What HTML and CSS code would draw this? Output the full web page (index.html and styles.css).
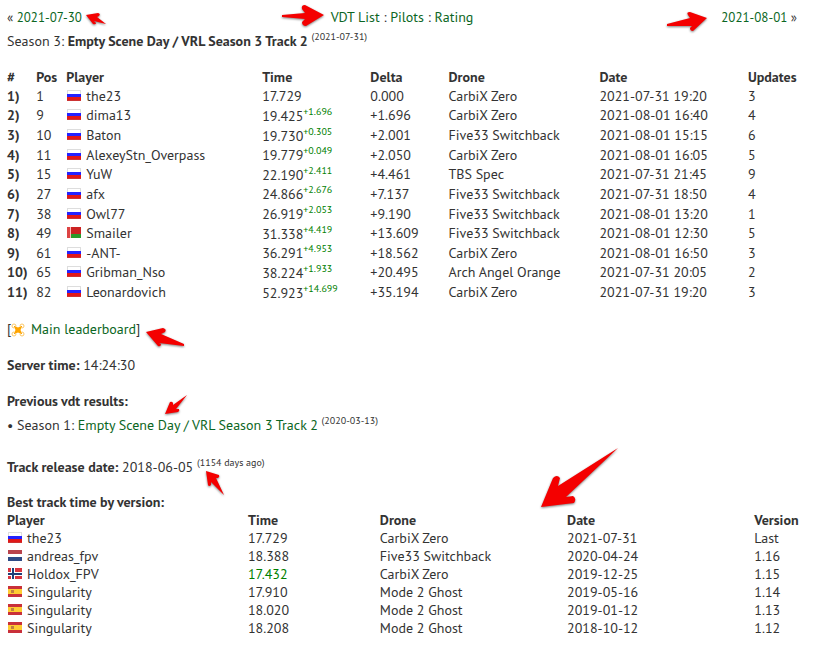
FILE: index.html
```
<!DOCTYPE html>
<html lang="en">
<head>
    <meta charset="UTF-8">
    <meta name="viewport" content="width=device-width, initial-scale=1.0">
    <title>Track leaderboard</title>
    <link rel="stylesheet" href="styles.css">
</head>
<body>

<!-- shared icons -->
<svg class="symbols" aria-hidden="true">
    <symbol id="ru" viewBox="0 0 14 11">
        <rect width="14" height="11" fill="#ddd"/>
        <rect x="1" y="1" width="12" height="3" fill="#fff"/>
        <rect y="4" width="14" height="3" fill="#22f"/>
        <rect y="7" width="14" height="3" fill="#e01818"/>
        <rect y="10" width="14" height="1" fill="#c33"/>
    </symbol>
    <symbol id="by" viewBox="0 0 14 11">
        <rect width="14" height="11" fill="#c22"/>
        <rect y="7" width="14" height="4" fill="#2a9a2a"/>
        <rect width="4" height="11" fill="#d44"/>
        <rect x="3" width="1" height="11" fill="#fbb"/>
    </symbol>
    <symbol id="nl" viewBox="0 0 14 11">
        <rect width="14" height="11" fill="#b8434c"/>
        <rect y="4" width="14" height="3" fill="#fff"/>
        <rect y="7" width="14" height="4" fill="#2d4a86"/>
    </symbol>
    <symbol id="no" viewBox="0 0 14 11">
        <rect width="14" height="11" fill="#d8353f"/>
        <path d="M3 0h4v11H3zM0 4h14v4H0z" fill="#fff"/>
        <path d="M4 0h2v11H4zM0 5h14v2H0z" fill="#1f3d77"/>
    </symbol>
    <symbol id="es" viewBox="0 0 14 11">
        <rect width="14" height="11" fill="#c9303a"/>
        <rect y="3" width="14" height="5" fill="#fc3"/>
        <rect x="3" y="4" width="3" height="3" fill="#c08040"/>
    </symbol>
    <symbol id="drone" viewBox="0 0 14 14">
        <g fill="none" stroke="#fbc766" stroke-width="1">
            <circle cx="3" cy="3" r="2"/>
            <circle cx="11" cy="3" r="2"/>
            <circle cx="3" cy="11" r="2"/>
            <circle cx="11" cy="11" r="2"/>
        </g>
        <path d="M3 3l8 8M11 3l-8 8" stroke="#ffa500" stroke-width="1"/>
        <path d="M4 4l3 1 3-1-1 3 1 3-3-1-3 1 1-3z" fill="#ffa500" stroke="#ffa500"/>
    </symbol>
</svg>

<div class="container">
    <nav class="nav">
        <div class="day">« <a href="#prev">2021-07-30</a></div>
        <div><a href="#list">VDT List</a> : <a href="#pilots">Pilots</a> : <a href="#rating">Rating</a></div>
        <div class="day next"><a href="#next">2021-08-01</a> »</div>
    </nav>
    <div class="track">Season 3: <b>Empty Scene Day / VRL Season 3 Track 2</b> <sup>(2021-07-31)</sup></div>

    <table class="results">
        <colgroup>
            <col class="c-num"><col class="c-pos"><col class="c-player"><col class="c-time">
            <col class="c-delta"><col class="c-drone"><col class="c-date"><col>
        </colgroup>
        <thead>
            <tr><th>#</th><th>Pos</th><th>Player</th><th>Time</th><th>Delta</th><th>Drone</th><th>Date</th><th>Updates</th></tr>
        </thead>
        <tbody>
            <tr><th>1)</th><td>1</td><td><svg class="flag"><use href="#ru"/></svg>the23</td><td class="time">17.729</td><td>0.000</td><td>CarbiX Zero</td><td>2021-07-31 19:20</td><td>3</td></tr>
            <tr><th>2)</th><td>9</td><td><svg class="flag"><use href="#ru"/></svg>dima13</td><td class="time">19.425<sup>+1.696</sup></td><td>+1.696</td><td>CarbiX Zero</td><td>2021-08-01 16:40</td><td>4</td></tr>
            <tr><th>3)</th><td>10</td><td><svg class="flag"><use href="#ru"/></svg>Baton</td><td class="time">19.730<sup>+0.305</sup></td><td>+2.001</td><td>Five33 Switchback</td><td>2021-08-01 15:15</td><td>6</td></tr>
            <tr><th>4)</th><td>11</td><td><svg class="flag"><use href="#ru"/></svg>AlexeyStn_Overpass</td><td class="time">19.779<sup>+0.049</sup></td><td>+2.050</td><td>CarbiX Zero</td><td>2021-08-01 16:05</td><td>5</td></tr>
            <tr><th>5)</th><td>15</td><td><svg class="flag"><use href="#ru"/></svg>YuW</td><td class="time">22.190<sup>+2.411</sup></td><td>+4.461</td><td>TBS Spec</td><td>2021-07-31 21:45</td><td>9</td></tr>
            <tr><th>6)</th><td>27</td><td><svg class="flag"><use href="#ru"/></svg>afx</td><td class="time">24.866<sup>+2.676</sup></td><td>+7.137</td><td>Five33 Switchback</td><td>2021-07-31 18:50</td><td>4</td></tr>
            <tr><th>7)</th><td>38</td><td><svg class="flag"><use href="#ru"/></svg>Owl77</td><td class="time">26.919<sup>+2.053</sup></td><td>+9.190</td><td>Five33 Switchback</td><td>2021-08-01 13:20</td><td>1</td></tr>
            <tr><th>8)</th><td>49</td><td><svg class="flag"><use href="#by"/></svg>Smailer</td><td class="time">31.338<sup>+4.419</sup></td><td>+13.609</td><td>Five33 Switchback</td><td>2021-08-01 12:30</td><td>5</td></tr>
            <tr><th>9)</th><td>61</td><td><svg class="flag"><use href="#ru"/></svg>-ANT-</td><td class="time">36.291<sup>+4.953</sup></td><td>+18.562</td><td>CarbiX Zero</td><td>2021-08-01 16:50</td><td>3</td></tr>
            <tr><th>10)</th><td>65</td><td><svg class="flag"><use href="#ru"/></svg>Gribman_Nso</td><td class="time">38.224<sup>+1.933</sup></td><td>+20.495</td><td>Arch Angel Orange</td><td>2021-07-31 20:05</td><td>2</td></tr>
            <tr><th>11)</th><td>82</td><td><svg class="flag"><use href="#ru"/></svg>Leonardovich</td><td class="time">52.923<sup>+14.699</sup></td><td>+35.194</td><td>CarbiX Zero</td><td>2021-07-31 19:20</td><td>3</td></tr>
        </tbody>
    </table>

    <p>[<svg class="drone"><use href="#drone"/></svg> <a href="#main">Main leaderboard</a>]</p>
    <p><b>Server time:</b> 14:24:30</p>
    <p><b>Previous vdt results:</b></p>
    <div class="track">• Season 1: <a href="#season1">Empty Scene Day / VRL Season 3 Track 2</a> <sup>(2020-03-13)</sup></div>
    <div class="track release"><b>Track release date:</b> 2018-06-05 <sup>(1154 days ago)</sup></div>

    <table class="versions">
        <caption>Best track time by version:</caption>
        <colgroup>
            <col class="v-player"><col class="v-time"><col class="v-drone"><col class="v-date"><col>
        </colgroup>
        <thead>
            <tr><th>Player</th><th>Time</th><th>Drone</th><th>Date</th><th>Version</th></tr>
        </thead>
        <tbody>
            <tr><td><svg class="flag"><use href="#ru"/></svg>the23</td><td>17.729</td><td>CarbiX Zero</td><td>2021-07-31</td><td>Last</td></tr>
            <tr><td><svg class="flag"><use href="#nl"/></svg>andreas_fpv</td><td>18.388</td><td>Five33 Switchback</td><td>2020-04-24</td><td>1.16</td></tr>
            <tr><td><svg class="flag"><use href="#no"/></svg>Holdox_FPV</td><td class="best">17.432</td><td>CarbiX Zero</td><td>2019-12-25</td><td>1.15</td></tr>
            <tr><td><svg class="flag"><use href="#es"/></svg>Singularity</td><td>17.910</td><td>Mode 2 Ghost</td><td>2019-05-16</td><td>1.14</td></tr>
            <tr><td><svg class="flag"><use href="#es"/></svg>Singularity</td><td>18.020</td><td>Mode 2 Ghost</td><td>2019-01-12</td><td>1.13</td></tr>
            <tr><td><svg class="flag"><use href="#es"/></svg>Singularity</td><td>18.208</td><td>Mode 2 Ghost</td><td>2018-10-12</td><td>1.12</td></tr>
        </tbody>
    </table>
</div>

<!-- red arrows drawn over the page -->
<svg class="arrows" viewBox="0 0 832 658" aria-hidden="true">
    <path d="M86 15L98 13Q101 14 99 16L97 17L106 24L94 21L96 23Q96 25 93 24Z"/>
    <path d="M324 15L305 5Q301 5 302 9L305 13L282 15L282 17L305 19L302 22Q302 26 306 26Z"/>
    <path d="M707 18L690 12Q686 12 688 15L690 18L667 24L667 26L692 26L690 28Q690 31 693 31Z"/>
    <path d="M146 332L163 328Q167 329 165 332L161 334L184 344L184 346L159 343L161 344Q161 347 158 346Z"/>
    <path d="M165 414L170 402Q172 401 173 403L173 405L187 395L176 409L179 409Q180 411 178 412Z"/>
    <path d="M206 471L219 475Q220 477 218 478L216 478L224 495L211 482L211 485Q209 487 208 485Z"/>
    <path d="M541 507L553 478Q557 474 560 478L558 486L618 448L566 497L573 496Q577 499 574 503Z"/>
</svg>

</body>
</html>
```
FILE: styles.css
```
* {
    box-sizing: border-box;
}
body {
    margin: 0;
    font-family: "PT Sans", "Noto Sans", sans-serif;
    font-size: 14px;
    line-height: 18px;
    color: #333;
    background-color: #fff;
}
a {
    color: #0b6623;
    text-decoration: none;
}
a:hover {
    text-decoration: underline;
}
b, th, caption {
    font-weight: 600;
}
p {
    margin: 18px 0 0;
}
sup {
    font-size: 10px;
    line-height: 0;
}
.symbols {
    position: absolute;
    width: 0;
    height: 0;
}
.container {
    padding: 8px 35px 8px 7px;
}
.nav {
    display: grid;
    grid-template-columns: 1fr auto 1fr;
    align-items: baseline;
    height: 18px;
}
.day {
    font-size: 13px;
}
.next {
    text-align: right;
}
.track {
    padding-top: 6px;
}
.release {
    margin-top: 18px;
}
table {
    width: 100%;
    table-layout: fixed;
    border-collapse: collapse;
    margin-top: 18px;
}
th, td {
    padding: 0;
    text-align: left;
    white-space: nowrap;
}
caption {
    text-align: left;
}
.results {
    height: 234px;
}
.results thead {
    height: 18px;
}
.results .time {
    padding-top: 1px;
}
.time sup {
    color: #008000;
}
.versions {
    margin-top: 17px;
}
.best {
    color: #008000;
}
.c-num { width: 3.7%; }
.c-pos { width: 3.8%; }
.c-player { width: 24.8%; }
.c-time { width: 13.7%; }
.c-delta { width: 9.9%; }
.c-drone { width: 19.1%; }
.c-date { width: 18.8%; }
.v-player { width: 30.5%; }
.v-time { width: 16.7%; }
.v-drone { width: 23.7%; }
.v-date { width: 23.7%; }
.flag {
    width: 14px;
    height: 11px;
    margin: 0 5px 0 1px;
    vertical-align: 0;
}
.drone {
    width: 14px;
    height: 14px;
    margin-right: 2px;
    vertical-align: -3px;
}
.arrows {
    position: absolute;
    top: 0;
    left: 0;
    width: 832px;
    height: 658px;
    pointer-events: none;
    fill: #f40000;
    filter: drop-shadow(0 1px 1px rgba(0, 0, 0, 0.5));
}
```
